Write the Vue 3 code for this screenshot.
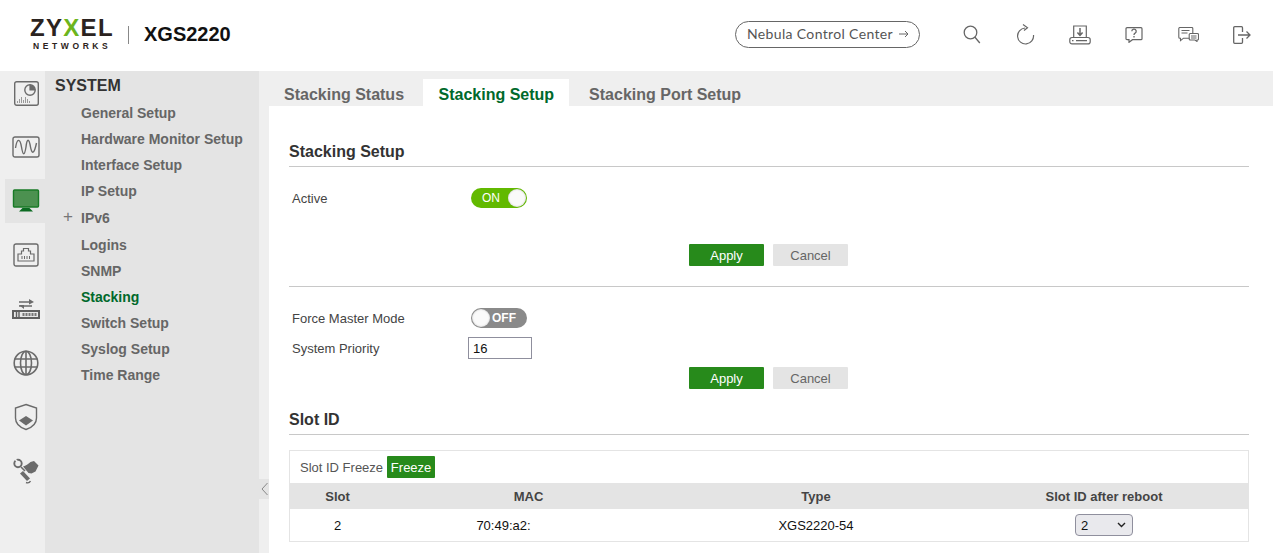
<script setup>
const menu = [
  { label: 'General Setup' },
  { label: 'Hardware Monitor Setup' },
  { label: 'Interface Setup' },
  { label: 'IP Setup' },
  { label: 'IPv6', plus: true },
  { label: 'Logins' },
  { label: 'SNMP' },
  { label: 'Stacking', active: true },
  { label: 'Switch Setup' },
  { label: 'Syslog Setup' },
  { label: 'Time Range' }
]
const tabs = [
  { label: 'Stacking Status' },
  { label: 'Stacking Setup', active: true },
  { label: 'Stacking Port Setup' }
]
</script>

<template>
  <div class="page">
    <header class="top">
      <div class="brand">
        <div class="logo">
          <div class="logo-main">ZY<span class="logo-x">X</span>EL</div>
          <div class="logo-sub">NETWORKS</div>
        </div>
        <span class="brand-sep"></span>
        <span class="model">XGS2220</span>
      </div>
      <div class="top-actions">
        <button class="nebula">Nebula Control Center
          <svg width="10" height="8" viewBox="0 0 10 8" fill="none" stroke="#666" stroke-width="1"><path d="M0 4h9M6 1l3 3-3 3"/></svg>
        </button>
        <div class="top-icons">
          <span class="top-icon">
            <svg width="18" height="19" viewBox="0 0 18 19" fill="none" stroke="#666" stroke-width="1.300"><circle cx="7.500" cy="7.500" r="6.300"/><path d="M11.800 12l5 6"/></svg>
          </span>
          <span class="top-icon">
            <svg width="18" height="21" viewBox="0 0 18 21" fill="none" stroke="#666" stroke-width="1.200"><path d="M8 4A8 8 0 1 0 16.500 11"/><path d="M6 .5l4.500 3.200L7 6.500"/></svg>
          </span>
          <span class="top-icon">
            <svg width="22" height="20" viewBox="0 0 22 20" fill="none" stroke="#666" stroke-width="1.200"><path d="M4.700 12.500V1h12.600v11.500"/><path d="M11 3v7M8.400 7.500L11 10.300l2.600-2.800" stroke-width="1.500"/><rect x="0.800" y="12.500" width="20.400" height="6.400" rx="2.200"/><path d="M7 15.700h11M3 15.700h1.500"/></svg>
          </span>
          <span class="top-icon">
            <svg width="18" height="16" viewBox="0 0 18 16" fill="none" stroke="#666" stroke-width="1.200"><path d="M2 .7h14a1 1 0 0 1 1 1v10a1 1 0 0 1-1 1H7.500L4 15.300v-2.600H2a1 1 0 0 1-1-1v-10a1 1 0 0 1 1-1z"/><path d="M6.800 4.300a2.200 2.200 0 1 1 3.300 1.900c-.8.400-1.100.9-1.100 1.700M9 9v1.500" stroke-width="1.300"/></svg>
          </span>
          <span class="top-icon">
            <svg width="21" height="15" viewBox="0 0 21 15" fill="none" stroke="#666" stroke-width="1.100"><path d="M11.500 11.200H5.500l-3 2.500v-2.500H1.800a1 1 0 0 1-1-1V1.500a1 1 0 0 1 1-1h12a1 1 0 0 1 1 1v4.500"/><path d="M3.500 3.500h8M3.500 6h6"/><path d="M12.200 6.500h7.300a1 1 0 0 1 1 1v4.500a1 1 0 0 1-1 1h-.5v1.500l-2-1.500h-4.800a1 1 0 0 1-1-1V7.500a1 1 0 0 1 1-1z"/><path d="M13 9h5.500M13 11h5.500"/></svg>
          </span>
          <span class="top-icon">
            <svg width="18" height="18" viewBox="0 0 18 18" fill="none" stroke="#666" stroke-width="1.300"><path d="M9.500 6V1.700a1 1 0 0 0-1-1H1.700a1 1 0 0 0-1 1v14.600a1 1 0 0 0 1 1h6.800a1 1 0 0 0 1-1V12"/><path d="M5 9h12M13.500 5.500L17 9l-3.500 3.500"/></svg>
          </span>
        </div>
      </div>
    </header>

    <div class="body">
      <nav class="rail">
        <div class="rail-item">
          <svg width="25" height="25" viewBox="0 0 25 25" fill="none" stroke="#6b6b6b"><rect x=".7" y=".7" width="23.600" height="23.600" rx="2" stroke-width="1.400"/><circle cx="16" cy="9" r="5.200" stroke-width="1.400"/><path d="M16 3.800V9h5.200" stroke-width="1.200"/><path d="M16 9V3.800A5.200 5.200 0 0 1 21.200 9z" fill="#6b6b6b" stroke="none"/><path d="M3.500 22v-2M5.500 22v-4M7.500 22v-6M9.500 22v-3M11.500 22v-6M13.500 22v-4M15.500 22v-2" stroke="#999" stroke-width="1"/></svg>
        </div>
        <div class="rail-item">
          <svg width="28" height="22" viewBox="0 0 28 22" fill="none" stroke="#6b6b6b"><rect x="1" y="1" width="26" height="20" rx="2" stroke-width="1.400"/><path d="M3.500 12C5 2 8 2 9.500 11 11 20 12.500 20 14 11 15 2 17 2 18.500 11 19.800 18 22 19 24.500 7" stroke-width="1.400"/></svg>
        </div>
        <div class="rail-item is-active">
          <svg width="28" height="24" viewBox="0 0 28 24" fill="none"><rect x="1.500" y="1" width="25" height="17" rx="1" fill="#4c9150" stroke="#187a26" stroke-width="1.400"/><path d="M10.500 19h7l3.500 3.500H7z" fill="#0c6b22"/></svg>
        </div>
        <div class="rail-item">
          <svg width="26" height="24" viewBox="0 0 26 24" fill="none" stroke="#6b6b6b"><rect x="1" y="1" width="24" height="22" rx="2" stroke-width="1.400"/><path d="M5 18v-7h3.500V8h2V5.500h5V8h2v3H21v7z" stroke-width="1.200"/><path d="M9 16v-3M11.500 16v-3M14 16v-3M16.500 16v-3" stroke-width="1"/></svg>
        </div>
        <div class="rail-item">
          <svg width="28" height="20" viewBox="0 0 28 20" fill="none"><path d="M7 3h12M7 7h13" stroke="#6b6b6b" stroke-width="1.500"/><path d="M17 0l5 3-5 2.500zM7 6h5l0 4z" fill="#6b6b6b"/><rect x="1" y="12" width="26" height="7" fill="#e8e8e8" stroke="#5f5f5f" stroke-width="2"/><path d="M4.500 12v7M7 12v7" stroke="#5f5f5f" stroke-width="1.400"/><path d="M10.500 15.500h14" stroke="#777" stroke-width="3" stroke-dasharray="2 1"/></svg>
        </div>
        <div class="rail-item">
          <svg width="26" height="26" viewBox="0 0 26 26" fill="none" stroke="#6b6b6b" stroke-width="1.600"><circle cx="13" cy="13" r="11.800"/><ellipse cx="13" cy="13" rx="5.500" ry="11.800"/><path d="M13 1v24M1.500 9h23M1.500 17h23"/></svg>
        </div>
        <div class="rail-item">
          <svg width="24" height="28" viewBox="0 0 24 28" fill="none"><path d="M12 1.500l10.500 3.500v10c0 6-4.500 9.500-10.500 11.500C6 24.500 1.500 21 1.500 15V5z" stroke="#6b6b6b" stroke-width="1.400"/><path d="M12 13l7 4.500-7 5-7-5z" fill="#6b6b6b"/></svg>
        </div>
        <div class="rail-item">
          <svg width="28" height="26" viewBox="0 0 28 26" fill="none"><circle cx="6" cy="5.500" r="3.700" stroke="#6b6b6b" stroke-width="1.900"/><path d="M3 1l3.500 4" stroke="#efefef" stroke-width="1.600"/><path d="M9 9l4 4" stroke="#6b6b6b" stroke-width="1.600"/><path d="M11 8.500c3-1 5-2.500 7.500-4.500L22 3l4.500 4.500-3 6-4 2-3-.5z" fill="#6b6b6b"/><path d="M8 15.500l3-2.500 7 7.500-3 2.500z" fill="#6b6b6b"/><path d="M14 24.500c2 .8 3.500.5 4.500-1.500" stroke="#6b6b6b" stroke-width="1.400"/></svg>
        </div>
      </nav>

      <aside class="side">
        <h2 class="side-title">SYSTEM</h2>
        <ul class="menu">
          <li v-for="m in menu" :key="m.label" class="menu-item" :class="{ 'is-current': m.active, 'has-plus': m.plus }">
            <span v-if="m.plus" class="plus">+</span>{{ m.label }}
          </li>
        </ul>
      </aside>

      <main class="main">
        <span class="collapse">
          <svg width="7" height="14" viewBox="0 0 7 14" fill="none" stroke="#888" stroke-width="1"><path d="M6.500 1L1 7l5.500 6"/></svg>
        </span>
        <div class="tabs">
          <div v-for="t in tabs" :key="t.label" class="tab" :class="{ 'is-on': t.active }">{{ t.label }}</div>
        </div>
        <div class="content">
          <h3 class="section">Stacking Setup</h3>
          <div class="row row-active">
            <label class="lbl">Active</label>
            <span class="toggle on"><span class="toggle-text">ON</span><span class="knob"></span></span>
          </div>
          <div class="btns btns-a">
            <button class="btn apply">Apply</button>
            <button class="btn cancel">Cancel</button>
          </div>
          <hr class="rule" />
          <div class="row row-force">
            <label class="lbl">Force Master Mode</label>
            <span class="toggle off"><span class="knob"></span><span class="toggle-text">OFF</span></span>
          </div>
          <div class="row row-priority">
            <label class="lbl lbl-short">System Priority</label>
            <input class="num" value="16" />
          </div>
          <div class="btns btns-b">
            <button class="btn apply">Apply</button>
            <button class="btn cancel">Cancel</button>
          </div>
          <h3 class="section section-slot">Slot ID</h3>
          <div class="panel">
            <div class="freeze">
              <span>Slot ID Freeze</span>
              <button class="freeze-btn">Freeze</button>
            </div>
            <div class="grid grid-head">
              <span>Slot</span><span>MAC</span><span>Type</span><span>Slot ID after reboot</span>
            </div>
            <div class="grid grid-row">
              <span>2</span>
              <span class="mac">70:49:a2:</span>
              <span>XGS2220-54</span>
              <span class="sel-cell">
                <span class="sel-wrap">
                  <select class="sel"><option>2</option></select>
                  <svg class="chev" width="9" height="6" viewBox="0 0 9 6" fill="none" stroke="#222" stroke-width="1.400"><path d="M1 1l3.500 3.500L8 1"/></svg>
                </span>
              </span>
            </div>
          </div>
        </div>
      </main>
    </div>
  </div>
</template>

<style>
html, body { margin: 0; overflow: hidden; background: #fff; }
</style>

<style scoped>
.page { height: 553px; overflow: hidden; display: flex; flex-direction: column; font-family: "Liberation Sans", Arial, sans-serif; color: #444; }
.top { height: 71px; flex: none; display: flex; align-items: center; justify-content: space-between; padding: 0 0 2px 30px; box-sizing: border-box; background: #fff; }
.brand { display: flex; align-items: center; }
.logo { width: 84px; display: flex; flex-direction: column; align-items: flex-start; }
.logo-main { font-size: 24px; line-height: 18px; font-weight: 700; letter-spacing: 1.300px; color: #2b2320; }
.logo-x { color: #6cb51d; }
.logo-sub { font-size: 8.500px; line-height: 8px; font-weight: 700; letter-spacing: 3.600px; color: #2b2320; margin: 5px 0 0 3px; white-space: nowrap; }
.brand-sep { width: 1px; height: 18px; background: #888; margin: 0 15px 0 14px; }
.model { font-size: 20px; font-weight: 700; color: #111; margin-top: -1px; }
.top-actions { display: flex; align-items: center; }
.nebula { width: 185px; height: 27px; box-sizing: border-box; border: 1px solid #666; border-radius: 14px; background: #fff; color: #555; font-family: Lato, sans-serif; font-size: 14px; letter-spacing: .35px; padding: 0 0 2px 1px; display: flex; align-items: center; justify-content: center; gap: 6px; margin-right: 25px; }
.top-icons { display: flex; padding-right: 4px; }
.top-icon { width: 54px; height: 30px; display: flex; align-items: center; justify-content: center; }
.body { flex: 1; display: flex; min-height: 0; }
.rail { width: 45px; flex: none; background: #efefef; display: flex; flex-direction: column; gap: 10px; }
.rail-item { height: 44px; margin-left: 5px; display: flex; align-items: center; justify-content: center; padding-left: 2px; }
.rail-item.is-active { background: #e4e4e4; }
.side { width: 214px; flex: none; background: #e4e4e4; box-sizing: border-box; padding: 5px 0 0 10px; }
.side-title { margin: 0; font-size: 16px; line-height: 20px; font-weight: 700; color: #333; }
.menu { list-style: none; margin: 4px 0 0; padding: 0; }
.menu-item { position: relative; padding-left: 26px; height: 26px; line-height: 26px; font-size: 14px; font-weight: 700; color: #666; }
.menu-item.has-plus { height: 28px; line-height: 28px; }
.menu-item.is-current { color: #00692b; }
.plus { position: absolute; left: 8px; top: -1px; font-weight: 400; font-size: 17px; color: #777; }
.main { flex: 1; min-width: 0; background: #efefef; position: relative; display: flex; flex-direction: column; }
.collapse { position: absolute; left: 0; top: 408px; width: 10px; height: 20px; background: #e4e4e4; display: flex; align-items: center; justify-content: center; }
.tabs { height: 35px; flex: none; box-sizing: border-box; padding: 8px 0 0 10px; display: flex; gap: 4px; }
.tab { padding: 0 15px; height: 27px; line-height: 31px; font-size: 16px; font-weight: 700; color: #666; }
.tab.is-on { background: #fff; color: #00692b; padding: 0 15px 0 15.500px; }
.tab:last-child { padding-left: 16px; }
.content { flex: 1; margin-left: 10px; background: #fff; padding: 0 24px 0 20px; }
.section { margin: 0; font-size: 16px; font-weight: 700; color: #333; line-height: 20px; padding-top: 36px; box-sizing: content-box; height: 24px; border-bottom: 1px solid #c8c8c8; }
.section-slot { padding-top: 0; margin-top: 21px; height: 24px; }
.row { display: flex; align-items: center; padding-left: 3px; font-size: 13px; color: #444; }
.lbl { width: 179px; }
.lbl-short { width: 176px; }
.row-active { height: 20px; margin-top: 21px; }
.row-force { height: 20px; margin-top: 21px; }
.row-priority { height: 22px; margin-top: 9px; }
.toggle { width: 56px; height: 20px; border-radius: 10px; display: flex; align-items: center; box-sizing: border-box; font-size: 12px; color: #fff; padding: 1px; }
.toggle.on { background: #62b900; justify-content: space-between; padding-left: 11px; }
.toggle.off { background: #8a8a8a; font-weight: 700; gap: 2px; }
.knob { width: 18px; height: 18px; border-radius: 50%; background: #fafafa; box-shadow: 0 0 2px rgba(0,0,0,.25) inset; }
.btns { display: flex; justify-content: center; gap: 9px; padding-right: 1px; }
.btns-a { margin-top: 36px; }
.btns-b { margin-top: 8px; }
.btn { width: 75px; height: 22px; border: 0; border-radius: 1px; font-family: inherit; font-size: 13px; padding: 0; line-height: 24px; }
.apply { background: #278a1b; color: #fff; }
.cancel { background: #e4e4e4; color: #666; }
.rule { border: 0; border-top: 1px solid #c8c8c8; margin: 20px 0 0; }
.num { width: 64px; height: 22px; box-sizing: border-box; border: 1px solid #8f8f9d; border-radius: 0; padding: 1px 4px; font-family: inherit; font-size: 13px; color: #111; background: #fff; }
.panel { margin-top: 15px; border: 1px solid #e4e4e4; height: 92px; box-sizing: border-box; font-size: 13px; }
.freeze { height: 32px; display: flex; align-items: center; gap: 4px; padding-left: 10px; color: #555; }
.freeze-btn { width: 48px; height: 22px; border: 0; border-radius: 1px; background: #278a1b; color: #fff; font-family: inherit; font-size: 13px; padding: 0; }
.grid { display: grid; grid-template-columns: 95px 287px 288px 1fr; text-align: center; align-items: center; }
.grid-head { height: 26px; background: #e4e4e4; font-weight: 700; color: #444; }
.grid-row { height: 32px; color: #111; }
.mac { padding-right: 50px; }
.sel-cell { display: flex; justify-content: center; }
.sel-wrap { position: relative; display: inline-flex; }
.sel { appearance: none; width: 58px; height: 22px; box-sizing: border-box; border: 1px solid #8f8f9d; border-radius: 4px; background: #e9e9ed; font-family: inherit; font-size: 13px; color: #111; padding: 0 5px; }
.chev { position: absolute; right: 7px; top: 8px; pointer-events: none; }
</style>
